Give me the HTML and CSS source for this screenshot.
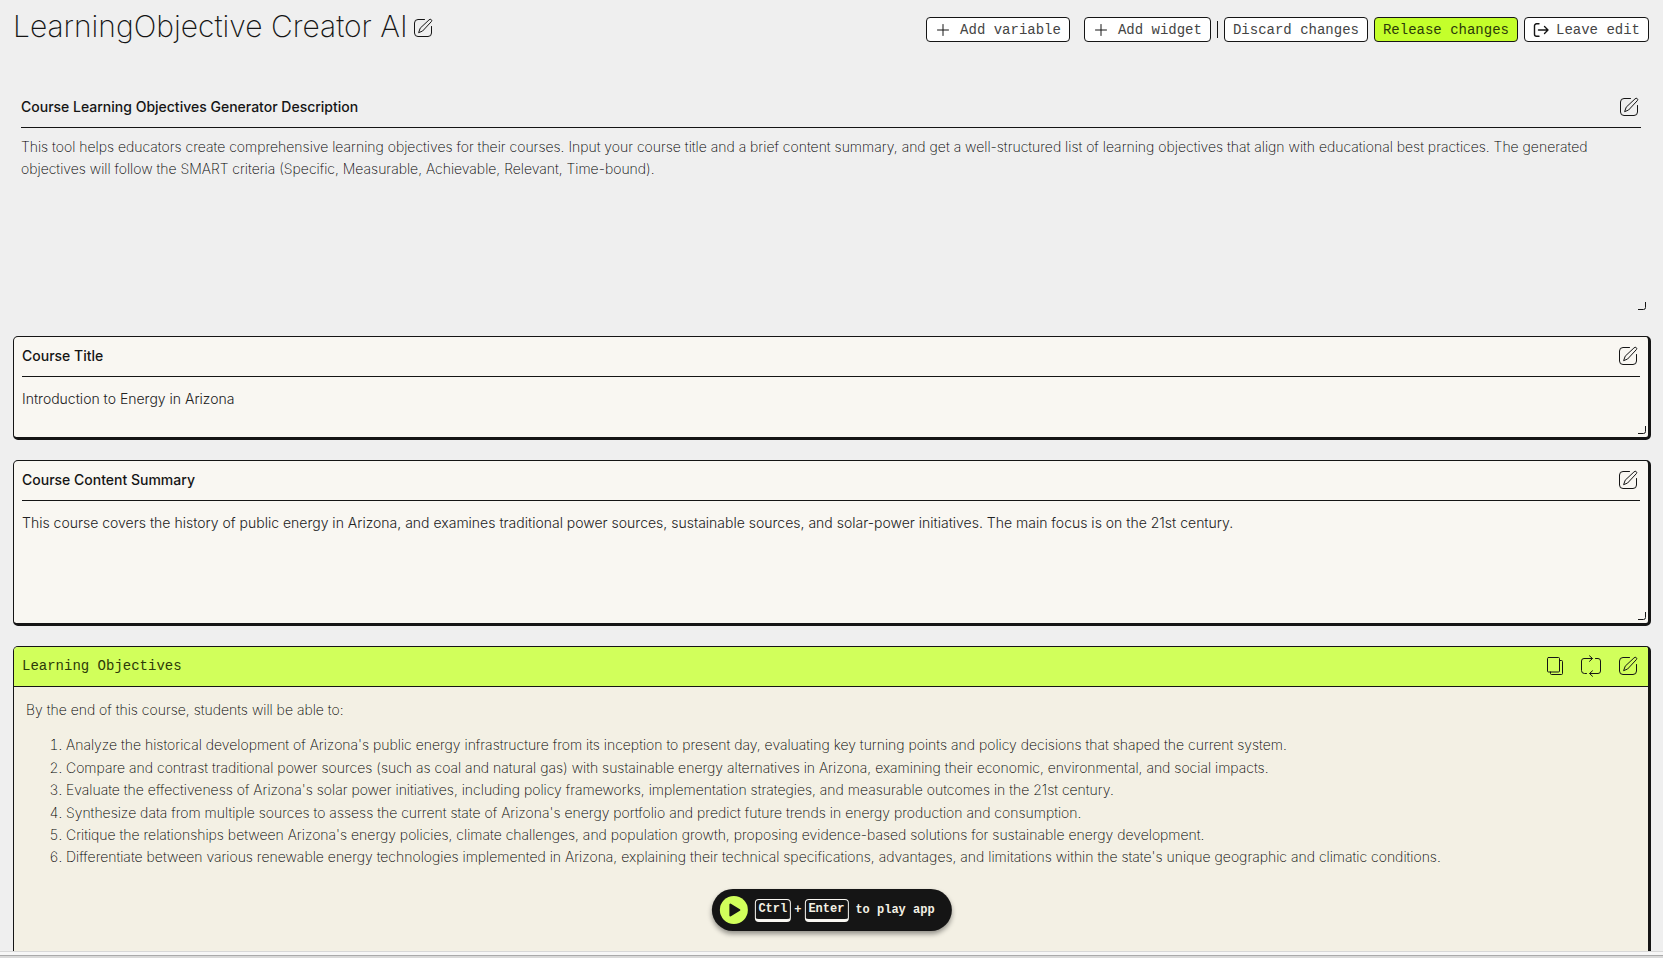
FILE: index.html
```html
<!DOCTYPE html>
<html lang="en">
<head>
<meta charset="utf-8">
<title>LearningObjective Creator AI</title>
<link rel="stylesheet" href="styles.css">
</head>
<body>
<svg class="sprite" aria-hidden="true">
  <symbol id="i-edit" viewBox="0 0 20 20"><path d="M11.500 1.500H5A3.500 3.500 0 0 0 1.500 5v10A3.500 3.500 0 0 0 5 18.500h10a3.500 3.500 0 0 0 3.500-3.500V8.500"/><path d="M16.200 1.700a1.400 1.400 0 0 1 2.100 2L9.600 13l-4 1.700 1.500-4.200z"/></symbol>
  <symbol id="i-plus" viewBox="0 0 12 12"><path d="M6 .5v11M.5 6h11"/></symbol>
  <symbol id="i-exit" viewBox="0 0 16 14"><path d="M6 .8H3.500a2 2 0 0 0-2 2v8.400a2 2 0 0 0 2 2H6M5.500 7H15M11.500 3.500 15 7l-3.500 3.500"/></symbol>
  <symbol id="i-copy" viewBox="0 0 18 20"><path d="M2.500 1.500h10a1 1 0 0 1 1 1V15a1 1 0 0 1-1 1h-10a1 1 0 0 1-1-1V2.500a1 1 0 0 1 1-1zM13.500 4.500h2a1 1 0 0 1 1 1v12a1 1 0 0 1-1 1h-10a1 1 0 0 1-1-1V16"/></symbol>
  <symbol id="i-loop" viewBox="0 0 22 22"><path d="M6.500 18.500h-2a3 3 0 0 1-3-3V6a2.500 2.500 0 0 1 2.500-2.500h8M9.500 .8l3 2.700-3 2.800M15.500 3.500H18A2.500 2.500 0 0 1 20.500 6v10a2.500 2.500 0 0 1-2.500 2.500h-8M12.500 15.800l-3 2.700 3 2.800"/></symbol>
  <symbol id="i-grip" viewBox="0 0 8 8"><path d="M7.500 0v5.500a2 2 0 0 1-2 2H0"/></symbol>
  <symbol id="i-play" viewBox="0 0 12 14"><path d="M1.500 1.500v11L10.500 7z"/></symbol>
</svg>
<main class="page">
  <header class="topbar">
    <div class="title">
      <h1>LearningObjective Creator AI</h1>
      <button class="icon-btn" aria-label="Edit name"><svg class="i20"><use href="#i-edit"/></svg></button>
    </div>
    <nav class="actions">
      <button class="btn wide"><svg class="i12"><use href="#i-plus"/></svg>Add variable</button>
      <button class="btn wide"><svg class="i12"><use href="#i-plus"/></svg>Add widget</button>
      <span class="sep"></span>
      <button class="btn">Discard changes</button>
      <button class="btn primary">Release changes</button>
      <button class="btn leave"><svg class="exit"><use href="#i-exit"/></svg>Leave edit</button>
    </nav>
  </header>

  <section class="widget plain">
    <div class="head"><h2>Course Learning Objectives Generator Description</h2>
      <button class="icon-btn" aria-label="Edit description"><svg class="i20"><use href="#i-edit"/></svg></button></div>
    <p class="text">This tool helps educators create comprehensive learning objectives for their courses. Input your course title and a brief content summary, and get a well-structured list of learning objectives that align with educational best practices. The generated objectives will follow the SMART criteria (Specific, Measurable, Achievable, Relevant, Time-bound).</p>
    <svg class="grip"><use href="#i-grip"/></svg>
  </section>

  <section class="widget card">
    <div class="head"><h2><label for="course">Course Title</label></h2>
      <button class="icon-btn" aria-label="Edit course title"><svg class="i20"><use href="#i-edit"/></svg></button></div>
    <input class="field" id="course" type="text" value="Introduction to Energy in Arizona">
    <svg class="grip"><use href="#i-grip"/></svg>
  </section>

  <section class="widget card">
    <div class="head"><h2><label for="summary">Course Content Summary</label></h2>
      <button class="icon-btn" aria-label="Edit summary"><svg class="i20"><use href="#i-edit"/></svg></button></div>
    <textarea class="field area" id="summary" rows="4">This course covers the history of public energy in Arizona, and examines traditional power sources, sustainable sources, and solar-power initiatives. The main focus is on the 21st century.</textarea>
    <svg class="grip"><use href="#i-grip"/></svg>
  </section>

  <section class="widget card output">
    <div class="head"><h2>Learning Objectives</h2>
      <div class="tools">
        <button class="icon-btn" aria-label="Copy"><svg class="copy"><use href="#i-copy"/></svg></button>
        <button class="icon-btn" aria-label="Regenerate"><svg class="i22"><use href="#i-loop"/></svg></button>
        <button class="icon-btn" aria-label="Edit objectives"><svg class="i20"><use href="#i-edit"/></svg></button>
      </div></div>
    <div class="result">
      <p>By the end of this course, students will be able to:</p>
      <ol>
        <li>Analyze the historical development of Arizona's public energy infrastructure from its inception to present day, evaluating key turning points and policy decisions that shaped the current system.</li>
        <li>Compare and contrast traditional power sources (such as coal and natural gas) with sustainable energy alternatives in Arizona, examining their economic, environmental, and social impacts.</li>
        <li>Evaluate the effectiveness of Arizona's solar power initiatives, including policy frameworks, implementation strategies, and measurable outcomes in the 21st century.</li>
        <li>Synthesize data from multiple sources to assess the current state of Arizona's energy portfolio and predict future trends in energy production and consumption.</li>
        <li>Critique the relationships between Arizona's energy policies, climate challenges, and population growth, proposing evidence-based solutions for sustainable energy development.</li>
        <li>Differentiate between various renewable energy technologies implemented in Arizona, explaining their technical specifications, advantages, and limitations within the state's unique geographic and climatic conditions.</li>
      </ol>
    </div>
  </section>
</main>
<footer class="edge"></footer>
<button class="play">
  <span class="disc"><svg class="tri"><use href="#i-play"/></svg></span>
  <span class="keys"><kbd>Ctrl</kbd>+<kbd>Enter</kbd></span>
  <span>to play app</span>
</button>
</body>
</html>
```
FILE: styles.css
```css
* { box-sizing: border-box; }
body {
  margin: 0;
  height: 100vh;
  display: flex;
  flex-direction: column;
  overflow: hidden;
  background: #efefef;
  color: #151515;
  font: 300 14px/22px Inter, "Liberation Sans", sans-serif;
}
h1, h2, p { margin: 0; }
button, input, textarea { font: inherit; color: inherit; }
svg { display: block; fill: none; stroke: #151515; stroke-linecap: round; stroke-linejoin: round; }
.sprite { position: absolute; width: 0; height: 0; }
.i20 { width: 20px; height: 20px; }
.i22 { width: 22px; height: 22px; }
.i12 { width: 12px; height: 12px; }
.copy { width: 18px; height: 20px; }
.exit { width: 16px; height: 14px; stroke-width: 1.400; }
.icon-btn { padding: 0; border: 0; background: none; }

.page {
  flex: 1;
  min-height: 0;
  display: flex;
  flex-direction: column;
  gap: 20px;
  padding: 0 12px 0 13px;
  overflow: hidden;
}
.topbar { display: flex; justify-content: space-between; align-items: flex-start; height: 67px; flex: none; }
.title { display: flex; align-items: flex-end; gap: 5px; padding-top: 7px; }
.title .icon-btn { padding-bottom: 7px; }
h1 { font-size: 30px; line-height: 38px; font-weight: 200; }
.actions { display: flex; align-items: center; gap: 6px; padding: 17px 2px 0 0; }
.btn {
  display: flex;
  align-items: center;
  gap: 8px;
  height: 25px;
  padding: 0 8px;
  border: 1px solid #151515;
  border-radius: 4px;
  background: #fff;
  font: 14px/16px "Liberation Mono", monospace;
  color: #444;
}
.wide { gap: 11px; padding-left: 10px; }
.wide + .wide { margin-left: 8px; }
.primary { background: #c4ff2b; color: #2c3a08; }
.leave { gap: 7px; }
.sep { width: 1px; height: 17px; background: #151515; }

.widget { position: relative; flex: none; }
.plain { height: 229px; padding: 0 10px 0 8px; }
.card {
  padding: 0 8px;
  border: solid #151515;
  border-width: 1px 3px 3px 1px;
  border-radius: 5px;
  background: #f9f7f2;
}
.head {
  display: flex;
  align-items: center;
  justify-content: space-between;
  height: 40px;
  padding: 0 2px 1px 0;
  border-bottom: 1px solid #151515;
}
.plain .head { height: 41px; }
h2 { font-size: 14px; line-height: 20px; font-weight: 500; }
.text { padding-top: 8px; color: #000; font-weight: 200; }
.field {
  display: block;
  width: 100%;
  height: 60px;
  padding: 10px 0 28px;
  border: 0;
  background: none;
  outline: 0;
  resize: none;
  color: #222;
}
.area { height: 122px; padding-top: 11px; }
.grip { position: absolute; right: 2px; bottom: 3px; width: 8px; height: 8px; }
.plain .grip { right: 5px; bottom: 6px; }

.output { flex: 1; padding: 0; background: #f3f0e4; border-bottom: 0; border-radius: 5px 5px 0 0; }
.output .head { padding: 0 10px 1px 8px; background: #d1ff5b; border-radius: 4px 2px 0 0; }
.output h2 { font: 14px/20px "Liberation Mono", monospace; color: #2c3a08; }
.tools { display: flex; align-items: center; gap: 16px; }
.result { padding: 12px; color: #000; line-height: 1.6; font-weight: 200; }
.result ol { margin: 13px 0 0; padding-left: 40px; }

.edge { flex: none; height: 7px; border-top: 1px solid #d8d8d8; background: linear-gradient(#f7f7f7 3px, #aaa 3px 4px, #d9d9d9 4px); }

.play {
  position: absolute;
  left: 50%;
  bottom: 27px;
  transform: translateX(-50%);
  display: flex;
  align-items: center;
  gap: 7px;
  height: 42px;
  padding: 0 17px 0 8px;
  border: 0;
  border-radius: 21px;
  background: #151515;
  box-shadow: 0 3px 5px #0006;
  color: #f3f0e4;
  font: bold 12px/16px "Liberation Mono", monospace;
  white-space: nowrap;
}
.disc { display: grid; place-items: center; width: 28px; height: 28px; border-radius: 50%; background: #d1ff5b; }
.tri { width: 12px; height: 14px; margin-left: 2px; fill: #151515; stroke-width: 2; }
.keys { display: flex; align-items: center; gap: 3px; }
kbd { font: inherit; padding: 1px 3px 2px; border: 1px solid #f9f7f2; border-bottom-width: 3px; border-radius: 4px; }
```
